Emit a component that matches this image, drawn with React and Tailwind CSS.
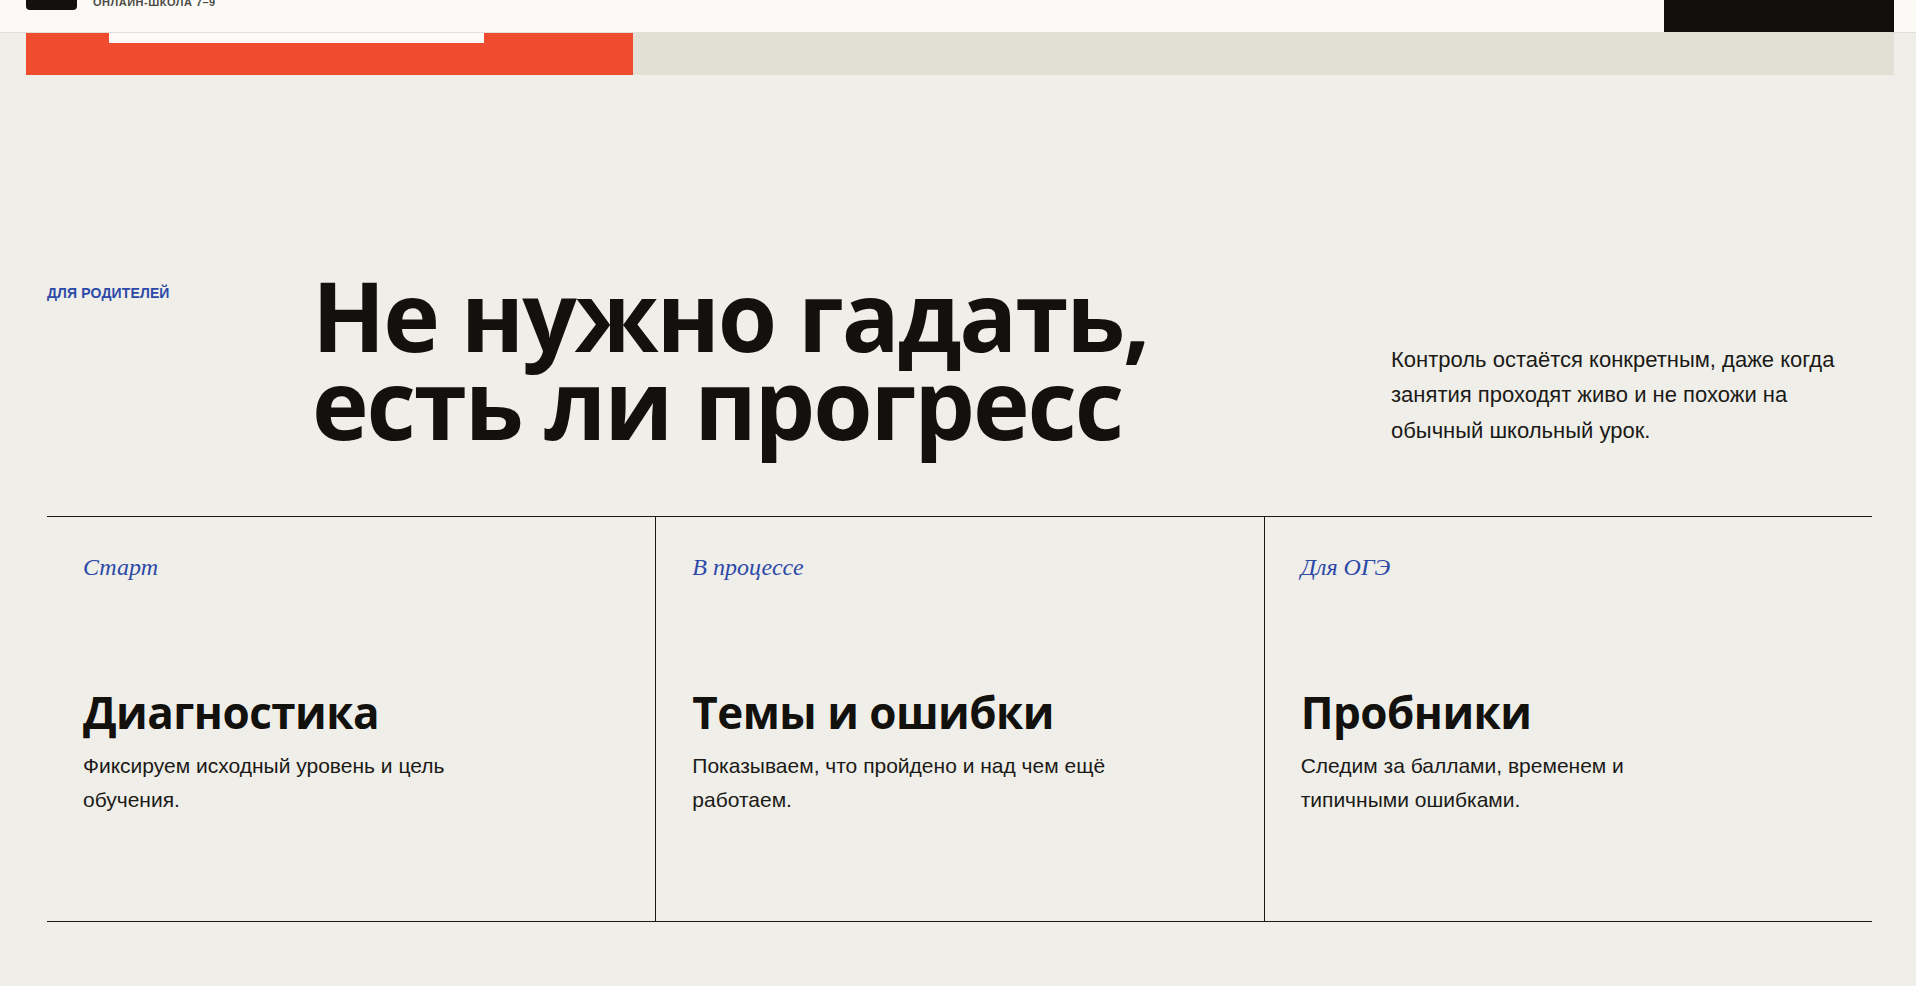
export default function App() {
  const cards = [
    { tag: "Старт", title: "Диагностика", text: "Фиксируем исходный уровень и цель обучения." },
    { tag: "В процессе", title: "Темы и ошибки", text: "Показываем, что пройдено и над чем ещё работаем." },
    { tag: "Для ОГЭ", title: "Пробники", text: "Следим за баллами, временем и типичными ошибками." },
  ];
  return (
    <div className="min-h-[986px] w-full bg-[#efeee9] overflow-hidden" style={{ fontFamily: '"Liberation Sans", Arial, sans-serif' }}>
      {/* header (partially scrolled out of view) */}
      <header className="h-[33px] bg-[#fbfaf6] border-b border-[#e1ded6] overflow-hidden flex items-start pl-[26px] pr-[22px]">
        <div className="flex items-start gap-4 flex-1">
          <div className="w-[51px] h-[10px] rounded-b-[4px] bg-[#12110e]"></div>
          <div className="-mt-[3px] text-[11px] font-bold uppercase text-[#4c4a45] tracking-[0.045em] leading-[11px]">Онлайн-школа 7–9</div>
        </div>
        <div className="w-[230px] h-[33px] bg-[#11100d]"></div>
      </header>
      {/* hero bottom strip */}
      <div className="flex h-[42px] pl-[26px] pr-[22px]">
        <div className="w-[607px] h-full bg-[#ee4b2f] pl-[83px]">
          <div className="w-[375px] h-[10px] bg-[#fdfbf7]"></div>
        </div>
        <div className="flex-1 h-full bg-[#e2dfd5]"></div>
      </div>

      {/* section */}
      <section className="pl-[47px] pr-[44px] pt-[196px]">
        <div className="grid grid-cols-[267px_1fr_481px] items-start">
          <div className="mt-[12px] text-[14px] leading-[20px] font-bold uppercase text-[#2d49a7] tracking-[0.01em]">Для родителей</div>
          <h2
            className="-ml-[2px] text-[96px] leading-[88px] font-bold text-[#12110e] tracking-[-0.022em]"
            style={{ fontFamily: '"Open Sans", sans-serif' }}
          >
            Не нужно гадать,
            <br />
            есть ли прогресс
          </h2>
          <p className="self-end text-[22px] leading-[35.5px] text-[#1b1a17] -mb-[1px]">
            Контроль остаётся конкретным, даже когда занятия проходят живо и не похожи на обычный школьный урок.
          </p>
        </div>

        <div className="mt-[69px] grid grid-cols-3 border-t border-b border-[#1a1915]">
          {cards.map((c, i) => (
            <div key={c.title} className={`min-h-[404px] pl-9 pr-9 pt-9 ${i > 0 ? "border-l border-[#1a1915]" : ""}`}>
              <div
                className="italic text-[24px] leading-[28px] text-[#2d49a7]"
                style={{ fontFamily: '"Liberation Serif", "Times New Roman", serif' }}
              >
                {c.tag}
              </div>
              <h3
                className="mt-[107px] text-[44px] leading-[48px] font-bold text-[#12110e] tracking-[-0.012em]"
                style={{ fontFamily: '"Open Sans", sans-serif' }}
              >
                {c.title}
              </h3>
              <p className="mt-[13px] max-w-[416px] text-[21px] leading-[34px] text-[#1b1a17]">{c.text}</p>
            </div>
          ))}
        </div>
      </section>
    </div>
  );
}
